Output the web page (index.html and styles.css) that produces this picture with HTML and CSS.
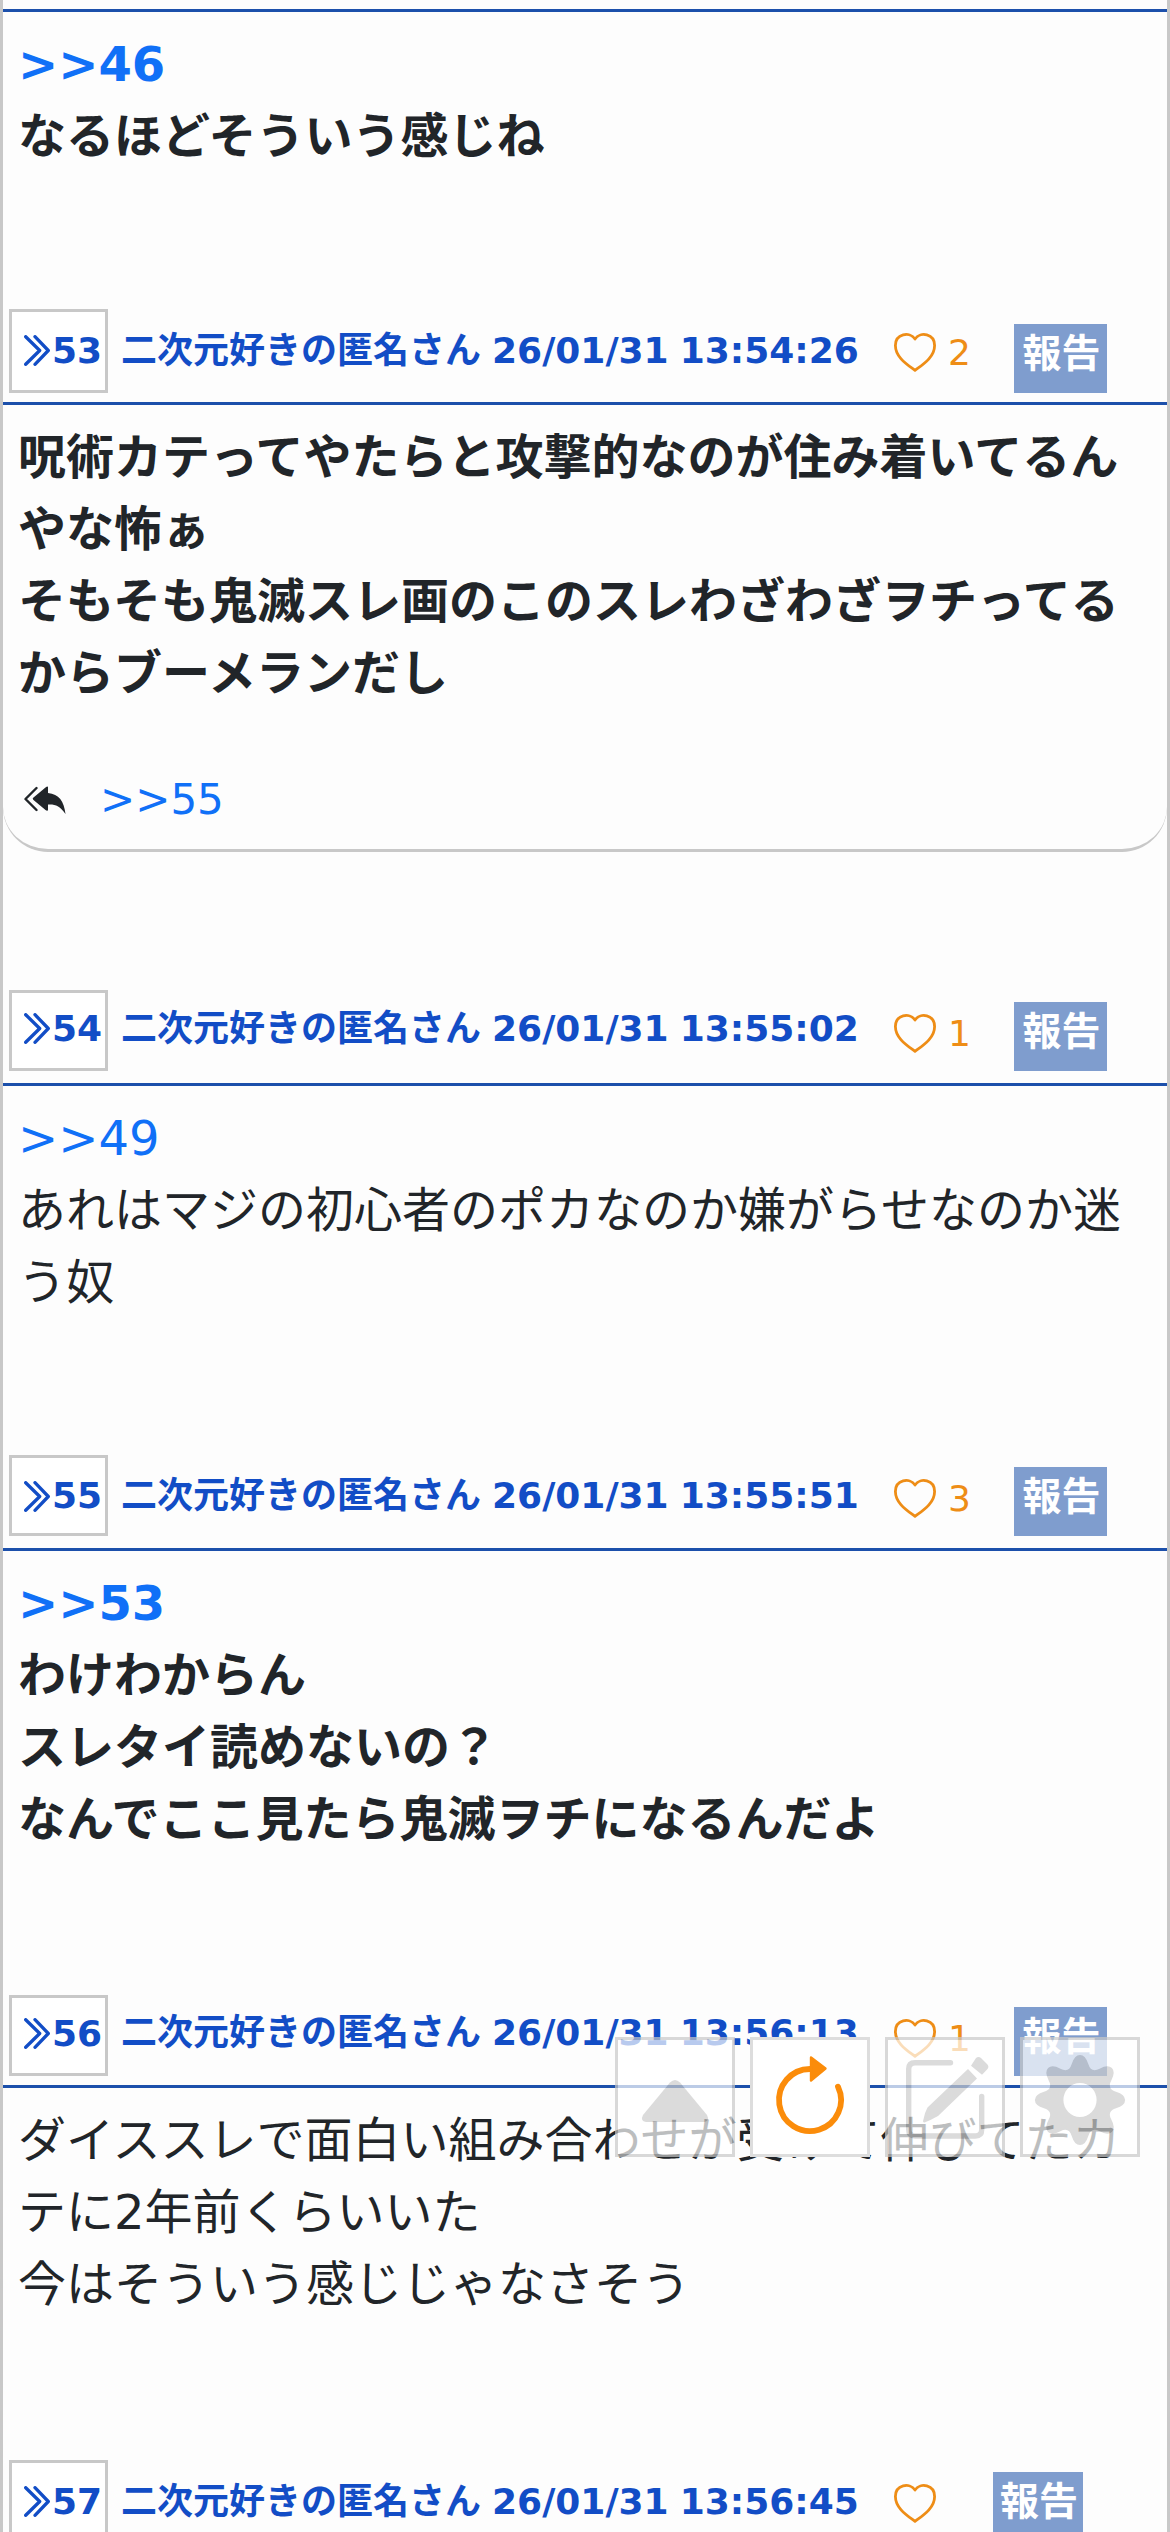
FILE: index.html
```html
<!DOCTYPE html>
<html lang="ja">
<head>
<meta charset="utf-8">
<title>スレッド</title>
<link rel="stylesheet" href="styles.css">
</head>
<body>
<svg class="defs" width="0" height="0">
  <symbol id="quote" viewBox="0 0 26 31"><path d="M1.7 1.7 L15.7 15.5 L1.7 29.3 M11 1.7 L24.3 15.5 L11 29.3" fill="none" stroke="currentColor" stroke-width="3.3" stroke-linecap="round" stroke-linejoin="round"/></symbol>
  <symbol id="heart" viewBox="0 0 42 39"><path d="M21 37.4 C14 32 1.4 24.500 1.4 12.5 C1.4 1 15.5 -2 21 6 C26.500 -2 40.600 1 40.600 12.500 C40.600 24.500 28 32 21 37.400 Z" fill="none" stroke="currentColor" stroke-width="2.8" stroke-linejoin="round"/></symbol>
</svg>
<main class="thread">
  <article class="post post-52">
    <div class="body bold"><a class="ref">&gt;&gt;46</a><br>なるほどそういう感じね</div>
  </article>
  <article class="post post-53">
    <header class="head">
      <span class="num"><svg class="quote"><use href="#quote"/></svg>53</span>
      <span class="meta">二次元好きの匿名さん 26/01/31 13:54:26</span>
      <span class="like"><svg class="heart"><use href="#heart"/></svg><span class="count">2</span></span>
      <span class="report">報告</span>
    </header>
    <div class="body bold">呪術カテってやたらと攻撃的なのが住み着いてるん<br>やな怖ぁ<br>そもそも鬼滅スレ画のこのスレわざわざヲチってる<br>からブーメランだし</div>
    <div class="replies">
      <svg class="reply" viewBox="0 0 42 28"><path d="M12.500 2 L1.500 13 L12.500 24" fill="none" stroke="currentColor" stroke-width="2.4" stroke-linecap="round" stroke-linejoin="round"/><path d="M24 1.500 V7 C35 8 40 15 41.500 28 C36 20 31 18 24 18.500 V24 C24 25 22.500 25 21.500 24 L9.500 14 Q8 12.800 9.500 11.600 L21.500 1.500 Q24 -.5 24 1.500Z" fill="currentColor"/></svg>
      <a class="ref">&gt;&gt;55</a>
    </div>
  </article>
  <article class="post post-54">
    <header class="head">
      <span class="num"><svg class="quote"><use href="#quote"/></svg>54</span>
      <span class="meta">二次元好きの匿名さん 26/01/31 13:55:02</span>
      <span class="like"><svg class="heart"><use href="#heart"/></svg><span class="count">1</span></span>
      <span class="report">報告</span>
    </header>
    <div class="body"><a class="ref">&gt;&gt;49</a><br>あれはマジの初心者のポカなのか嫌がらせなのか迷<br>う奴</div>
  </article>
  <article class="post post-55">
    <header class="head">
      <span class="num"><svg class="quote"><use href="#quote"/></svg>55</span>
      <span class="meta">二次元好きの匿名さん 26/01/31 13:55:51</span>
      <span class="like"><svg class="heart"><use href="#heart"/></svg><span class="count">3</span></span>
      <span class="report">報告</span>
    </header>
    <div class="body bold"><a class="ref">&gt;&gt;53</a><br>わけわからん<br>スレタイ読めないの？<br>なんでここ見たら鬼滅ヲチになるんだよ</div>
  </article>
  <article class="post post-56">
    <header class="head">
      <span class="num"><svg class="quote"><use href="#quote"/></svg>56</span>
      <span class="meta">二次元好きの匿名さん 26/01/31 13:56:13</span>
      <span class="like"><svg class="heart"><use href="#heart"/></svg><span class="count">1</span></span>
      <span class="report">報告</span>
    </header>
    <div class="body">ダイススレで面白い組み合わせが受けて伸びてたカ<br>テに2年前くらいいた<br>今はそういう感じじゃなさそう</div>
  </article>
  <article class="post post-57">
    <header class="head">
      <span class="num"><svg class="quote"><use href="#quote"/></svg>57</span>
      <span class="meta">二次元好きの匿名さん 26/01/31 13:56:45</span>
      <span class="like"><svg class="heart"><use href="#heart"/></svg></span>
      <span class="report">報告</span>
    </header>
  </article>
</main>
<nav class="tools">
  <button class="tool" aria-label="上へ"><svg viewBox="0 0 114 114"><path d="M52 42.500 Q57 37.500 62 42.500 L89 75 Q92 81 86 82 H28 Q22 81 25 75Z" fill="#ccc"/></svg></button>
  <button class="tool active" aria-label="更新"><svg viewBox="0 0 114 114"><path d="M57 29 A31 31 0 1 0 85 46.700" fill="none" stroke="#fb8c0a" stroke-width="5.8" stroke-linecap="round"/><path d="M58 17.500 L72.500 28.500 L58 40.500Z" fill="#fb8c0a" stroke="#fb8c0a" stroke-width="2.4" stroke-linejoin="round"/></svg></button>
  <button class="tool" aria-label="書き込み"><svg viewBox="0 0 114 114"><path d="M62.500 22.700 H27 Q20.700 22.700 20.700 29 V89.500 Q20.700 96 27 96 H87.500 Q93.700 96 93.700 89.500 V56.500" fill="none" stroke="#ccc" stroke-width="5.400" stroke-linecap="round"/><path d="M80 29 L89 38.500 L50 76 Q43 80 36.500 82.500 Q34.500 82.500 35.300 80 Q36.500 73 39.500 67.500Z M83 25.700 L88 18 Q90.500 15.800 93 18 L99 24 Q101.500 26.500 99.500 29 L94 34.700Z" fill="#ccc"/></svg></button>
  <button class="tool" aria-label="設定"><svg viewBox="0 0 114 114"><path transform="translate(57 60)" d="M45.1 0 Q45.1 5.5 36 8.3 Q26.8 11.1 31.3 19.6 Q35.8 28 31.9 31.9 Q28 35.8 19.6 31.3 Q11.1 26.8 8.3 36 Q5.5 45.1 0 45.1 Q-5.5 45.1 -8.3 36 Q-11.1 26.8 -19.6 31.3 Q-28 35.8 -31.9 31.9 Q-35.8 28 -31.3 19.6 Q-26.8 11.1 -36 8.3 Q-45.1 5.5 -45.1 0 Q-45.1 -5.5 -36 -8.3 Q-26.8 -11.1 -31.3 -19.6 Q-35.8 -28 -31.9 -31.9 Q-28 -35.8 -19.6 -31.3 Q-11.1 -26.8 -8.3 -36 Q-5.5 -45.1 0 -45.1 Q5.5 -45.1 8.3 -36 Q11.1 -26.8 19.6 -31.3 Q28 -35.8 31.9 -31.9 Q35.8 -28 31.3 -19.6 Q26.8 -11.1 36 -8.3 Q45.1 -5.5 45.1 0Z M0 -17 A16.600 17 0 1 0 0 17 A16.600 17 0 1 0 0 -17Z" fill="#ccc" fill-rule="evenodd"/></svg></button>
</nav>
</body>
</html>
```
FILE: styles.css
```css
* { box-sizing: border-box; }
body {
  margin: 0;
  background: #fdfdfd;
  color: #212529;
  font-family: "DejaVu Sans", "Noto Sans CJK JP", sans-serif;
  font-size: 48px;
  line-height: 72px;
}
.defs { position: absolute; }
.thread {
  height: 2532px;
  overflow: hidden;
  border: solid #c8c8c8;
  border-width: 0 3px;
}
.post { display: flex; flex-direction: column; overflow: hidden; }
.post-52 { height: 309px; padding-top: 9px; }
.post-53 { height: 681px; }
.post-54 { height: 465px; }
.post-55 { height: 537px; }
.post-56 { height: 468px; }
.post-57 { height: 200px; }

.head {
  flex: none;
  display: flex;
  align-items: flex-end;
  height: 93px;
  padding: 0 6px 9px;
  color: #124dc6;
  font-size: 36px;
  font-weight: 700;
  line-height: 54px;
}
.post-54 .head, .post-55 .head { padding-bottom: 12px; }
.num {
  display: flex;
  align-items: center;
  width: 99px;
  height: 84px;
  padding: 0 0 1px 12px;
  border: 3px solid #c8c8c8;
  background: #fff;
}
.post-54 .num, .post-55 .num, .post-56 .num { height: 81px; }
.post-54 .num, .post-56 .num { padding-bottom: 4px; }
.post-55 .num { padding: 1px 0 0 12px; }
.quote { width: 26px; height: 31px; margin-right: 2px; flex: none; }
.meta {
  flex: 0 0 773px;
  margin-left: 13px;
  padding-bottom: 15px;
  white-space: nowrap;
  word-spacing: -1.5px;
}
.post-55 .meta { padding-bottom: 13px; }
.post-56 .meta { padding-bottom: 16px; }
.like {
  display: flex;
  align-items: center;
  width: 120px;
  height: 69px;
  padding-bottom: 6px;
  color: #ee8d16;
  font-weight: 400;
  gap: 12px;
}
.post-53 .like { padding-bottom: 12px; }
.heart { width: 42px; height: 39px; flex: none; }
.report {
  width: 93px;
  height: 69px;
  padding-left: 2px;
  background: #7f9dce;
  color: #fff;
  font-size: 39px;
  line-height: 60px;
  text-align: center;
}
.post-57 .like { width: 99px; height: 72px; padding-bottom: 9px; }
.post-57 .report { width: 90px; height: 72px; }

.body {
  flex: 1;
  padding: 16px 15px 0;
  border-top: 3px solid #1c50ab;
  white-space: nowrap;
}
.bold { font-weight: 700; }
.ref { color: #1070f7; }
.replies {
  display: flex;
  align-items: center;
  height: 105px;
  margin-bottom: 138px;
  padding: 3px 0 0 21px;
  border-bottom: 3px solid #c8c8c8;
  border-radius: 0 0 45px 45px;
  font-size: 42px;
}
.reply { width: 42px; height: 28px; margin-right: 34px; }

.tools {
  position: fixed;
  top: 2037px;
  left: 615px;
  display: flex;
  gap: 15px;
}
.tool {
  width: 120px;
  height: 120px;
  padding: 0;
  border: 3px solid #c8c8c8;
  background: #fff;
  opacity: .7;
}
.tool svg { display: block; width: 114px; height: 114px; }
.active { opacity: 1; border-color: #ddd; }
```
